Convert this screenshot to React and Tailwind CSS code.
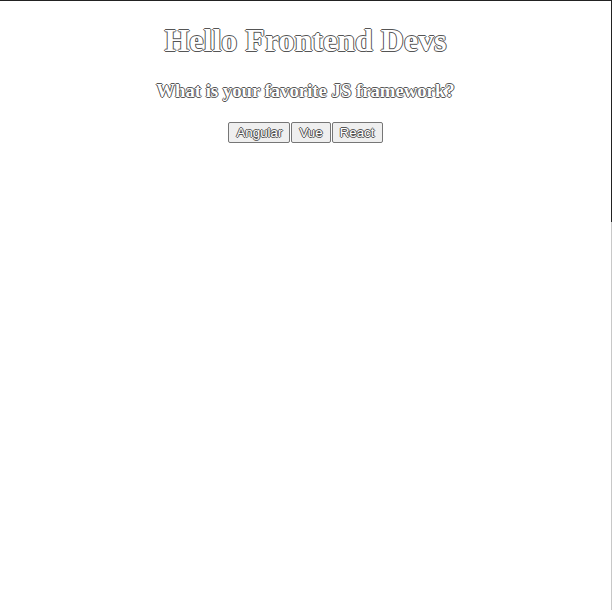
import React from "react";

const outline =
  "text-white [text-shadow:-1px_0_#555,1px_0_#555,0_-1px_#555,0_1px_#555]";

function FrameworkButton({ label }) {
  return (
    <button
      className={`h-[21px] px-[7px] border border-[#767676] rounded-[2px] bg-[#efefef] text-[13.333px] leading-none font-['Liberation_Sans',Arial,sans-serif] ${outline}`}
    >
      {label}
    </button>
  );
}

export default function App() {
  return (
    <div className="min-h-[610px] flex flex-col bg-white font-['Liberation_Serif','Times_New_Roman',serif]">
      {/* Top panel */}
      <div className="h-[222px] border-t border-r border-[#222] flex flex-col items-center">
        <h1 className={`mt-[21px] text-[32px] leading-[37px] font-bold ${outline}`}>
          Hello Frontend Devs
        </h1>
        <h3 className={`mt-[21px] text-[18.72px] leading-[22px] font-bold ${outline}`}>
          What is your favorite JS framework?
        </h3>
        <div className="mt-[20px] flex gap-px">
          <FrameworkButton label="Angular" />
          <FrameworkButton label="Vue" />
          <FrameworkButton label="React" />
        </div>
      </div>
      {/* Rest of page */}
      <div className="flex-1 border-r border-[#c8c8c8]"></div>
    </div>
  );
}
